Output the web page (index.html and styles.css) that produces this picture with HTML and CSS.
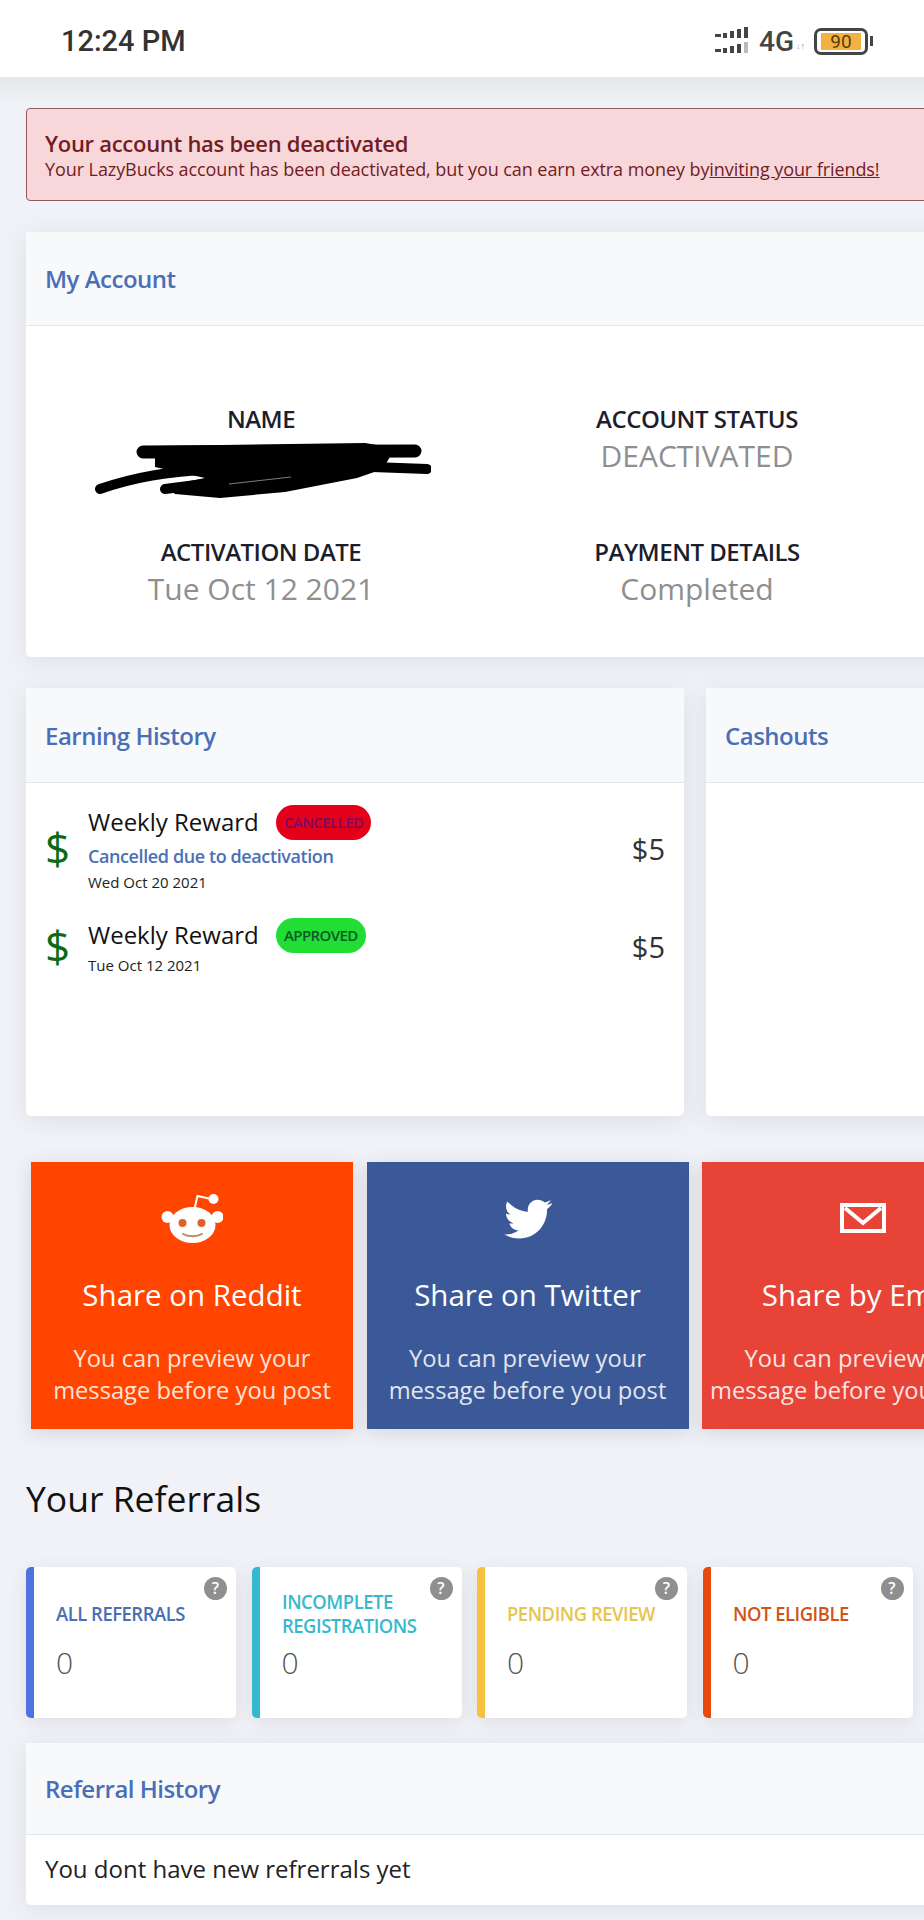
FILE: index.html
```html
<!DOCTYPE html>
<html>
<head>
<title>LazyBucks</title>
<link rel="stylesheet" href="styles.css">
</head>
<body>

<div class="status">
	<span class="time">12:24 PM</span>
	<div class="status-right">
		<svg class="signal" width="36" height="28" viewBox="0 0 36 28">
			<g fill="#444">
				<rect x="0" y="7" width="6" height="3"/><rect x="8" y="6" width="4" height="5"/><rect x="15" y="4" width="4" height="7"/><rect x="22" y="2" width="4" height="9"/><rect x="29" y="0" width="4" height="11"/>
				<rect x="0" y="22" width="6" height="3"/><rect x="8" y="21" width="4" height="5"/><rect x="15" y="19" width="4" height="7"/><rect x="22" y="17" width="4" height="9"/>
			</g>
			<rect x="29" y="15" width="4" height="11" fill="#bbb"/>
		</svg>
		<span class="net">4G</span>
		<span class="arrows">↓↑</span>
		<div class="battery"><span class="level">90</span></div>
		<div class="battery-tip"></div>
	</div>
</div>
<div class="peek">
	<i class="blue"></i><i class="teal"></i><i class="teal"></i>
</div>

<div class="page">

	<div class="alert">
		<h4>Your account has been deactivated</h4>
		<p>Your LazyBucks account has been deactivated, but you can earn extra money by<a href="#">inviting your friends!</a></p>
	</div>

	<div class="card account">
		<div class="card-head">My Account</div>
		<div class="account-body">
			<div class="info">
				<h5>NAME</h5>
				<svg class="scribble" width="336" height="58" viewBox="0 0 336 58">
					<path d="M60 4 L270 1 L300 6 L288 27 L262 36 L190 50 L125 56 L80 52 L70 44 L110 36 L60 25 Z" fill="#000"/>
					<path d="M48 10 L320 9" stroke="#000" stroke-width="13" fill="none" stroke-linecap="round"/>
					<path d="M332 27 L250 24" stroke="#000" stroke-width="10" fill="none" stroke-linecap="round"/>
					<path d="M5 47 C40 35 70 30 120 27" stroke="#000" stroke-width="10" fill="none" stroke-linecap="round"/>
					<path d="M70 47 L140 38" stroke="#000" stroke-width="10" fill="none" stroke-linecap="round"/>
					<path d="M134 42 L196 35" stroke="#fff" stroke-width="0.7" fill="none" opacity="0.7"/>
				</svg>
			</div>
			<div class="info">
				<h5>ACCOUNT STATUS</h5>
				<span>DEACTIVATED</span>
			</div>
			<div class="info">
				<h5>ACTIVATION DATE</h5>
				<span>Tue Oct 12 2021</span>
			</div>
			<div class="info">
				<h5>PAYMENT DETAILS</h5>
				<span>Completed</span>
			</div>
		</div>
	</div>

	<div class="two-col">
		<div class="card history">
			<div class="card-head">Earning History</div>
			<div class="history-body">
				<div class="row first">
					<span class="dollar">$</span>
					<div class="row-text">
						<div class="row-title">Weekly Reward <span class="pill red">CANCELLED</span></div>
						<div class="reason">Cancelled due to deactivation</div>
						<div class="date">Wed Oct 20 2021</div>
					</div>
					<span class="amount">$5</span>
				</div>
				<div class="row">
					<span class="dollar">$</span>
					<div class="row-text">
						<div class="row-title">Weekly Reward <span class="pill green">APPROVED</span></div>
						<div class="date">Tue Oct 12 2021</div>
					</div>
					<span class="amount">$5</span>
				</div>
			</div>
		</div>
		<div class="card history">
			<div class="card-head">Cashouts</div>
		</div>
	</div>

	<div class="shares">
		<div class="share reddit">
			<svg class="share-icon" width="62" height="54" viewBox="0 0 62 54">
				<path d="M33.500 15 L36.500 2 L48 4.500" stroke="#fff" stroke-width="2" fill="none"/>
				<circle cx="52.500" cy="5" r="5" fill="#fff"/>
				<circle cx="6.500" cy="23" r="6" fill="#fff"/>
				<circle cx="56.500" cy="23" r="6" fill="#fff"/>
				<ellipse cx="31.500" cy="31" rx="23" ry="18" fill="#fff"/>
				<circle cx="21.500" cy="29" r="4" fill="#e0602a"/>
				<circle cx="40.500" cy="29" r="4" fill="#e0602a"/>
				<path d="M22 40 C27 43 36 43 41 40" stroke="#b98a60" stroke-width="2" fill="none" stroke-linecap="round"/>
			</svg>
			<h3>Share on Reddit</h3>
			<p>You can preview your message before you post</p>
		</div>
		<div class="share twitter">
			<svg class="share-icon" width="48" height="42" viewBox="0 0 24 21">
				<path fill="#fff" d="M24 1.6c-.9.4-1.8.7-2.8.8 1-.6 1.800-1.600 2.200-2.400-.9.6-2 1-3.100 1.200C19.400.3 18.100-.1 16.800-.1c-2.700 0-4.900 2.200-4.900 4.900 0 .4 0 .8.100 1.100C7.900 5.700 4.300 3.700 1.700.7c-.4.700-.7 1.600-.7 2.500 0 1.700.9 3.200 2.200 4.100-.8 0-1.600-.2-2.200-.6v.1c0 2.400 1.700 4.400 3.900 4.800-.4.100-.8.200-1.300.2-.3 0-.6 0-.9-.1.600 2 2.400 3.400 4.600 3.400-1.700 1.300-3.800 2.100-6.100 2.100-.4 0-.8 0-1.200-.1C2.200 18.400 4.800 19.200 7.500 19.200c9.100 0 14-7.500 14-14v-.6c1-.7 1.800-1.600 2.500-2.600z"/>
			</svg>
			<h3>Share on Twitter</h3>
			<p>You can preview your message before you post</p>
		</div>
		<div class="share email">
			<svg class="share-icon" width="46" height="36" viewBox="0 0 46 36">
				<rect x="2" y="2" width="42" height="26" fill="none" stroke="#fff" stroke-width="4"/>
				<path d="M5 5 L23 20 L41 5" fill="none" stroke="#fff" stroke-width="4"/>
			</svg>
			<h3>Share by Email</h3>
			<p>You can preview your message before you submit</p>
		</div>
	</div>

	<h2 class="section-title">Your Referrals</h2>

	<div class="stats">
		<div class="stat s-blue"><span class="help">?</span><div class="stat-label"><span>ALL REFERRALS</span></div><div class="stat-num">0</div></div>
		<div class="stat s-teal"><span class="help">?</span><div class="stat-label"><span>INCOMPLETE REGISTRATIONS</span></div><div class="stat-num">0</div></div>
		<div class="stat s-yellow"><span class="help">?</span><div class="stat-label"><span>PENDING REVIEW</span></div><div class="stat-num">0</div></div>
		<div class="stat s-orange"><span class="help">?</span><div class="stat-label"><span>NOT ELIGIBLE</span></div><div class="stat-num">0</div></div>
	</div>

	<div class="card referral">
		<div class="card-head">Referral History</div>
		<div class="referral-body">You dont have new refrerrals yet</div>
	</div>

</div>
</body>
</html>
```

FILE: styles.css
```css
html, body { margin: 0; padding: 0; }
body { width: 924px; height: 1920px; overflow: hidden; background-color: #f1f2f7; font-family: "Open Sans", sans-serif; color: #111; }

.status { height: 77px; background-color: #fff; display: flex; align-items: center; justify-content: space-between; padding: 5px 0 0 61px; box-sizing: border-box; }
.time { font-family: Roboto, sans-serif; font-weight: 500; font-size: 29px; color: #333; }
.status-right { display: flex; align-items: center; margin-right: 51px; }
.signal { margin-right: 8px; }
.net { font-family: Roboto, sans-serif; font-weight: 500; font-size: 28px; color: #444; }
.arrows { font-size: 9px; color: #999; margin: 8px 9px 0 2px; }
.battery { width: 54px; height: 27px; box-sizing: border-box; border: 3px solid #444; border-radius: 7px; padding: 2px 4px; display: flex; }
.level { flex: 1; background-color: #f2b141; font-family: Roboto, sans-serif; font-size: 19px; line-height: 17px; text-align: center; color: #5a3d0c; }
.battery-tip { width: 3px; height: 10px; margin-left: 2px; background-color: #444; }

.peek { height: 2px; display: flex; margin-top: -2px; padding-left: 26px; }
.peek i { width: 9px; height: 2px; margin-right: 330px; }
.peek i.blue { background-color: #4a5f90; }
.peek i.teal { background-color: #36a9b4; }

.page { padding: 31px 0 0 26px; width: 1340px; box-sizing: border-box; background: linear-gradient(#e6e7ea, #f1f2f7 30px); }

.alert { background-color: #f8d7da; border: 1px solid #8b5b60; border-radius: 4px; height: 93px; box-sizing: border-box; padding: 20px 18px; color: #721c24; margin-bottom: 31px; }
.alert h4 { margin: 0; font-size: 22px; line-height: 28px; font-weight: 600; letter-spacing: -0.28px; }
.alert p { margin: 0; font-size: 18px; line-height: 24px; letter-spacing: -0.08px; }
.alert a { color: #721c24; text-decoration: underline; }

.card { background-color: #fff; border-radius: 5px; box-shadow: 0 4px 24px rgba(58,59,69,.1); }
.card-head { height: 94px; line-height: 94px; padding-left: 19px; background-color: #f8f9fb; border-bottom: 1px solid #e3e6f0; font-size: 24px; font-weight: 600; color: #4a6fb5; box-sizing: border-box; letter-spacing: -0.5px; }

.account { height: 425px; margin-bottom: 31px; }
.account-body { display: grid; grid-template-columns: 436px 436px; grid-auto-rows: 133px; padding: 77px 0 0 17px; text-align: center; }
.info h5 { margin: 0; font-size: 24px; line-height: 32px; font-weight: 600; color: #1c1e2c; letter-spacing: -0.5px; }
.info span { display: block; font-size: 30px; line-height: 42px; color: #8f8f8f; }
.scribble { display: block; margin: 7px 0 0 52px; }

.two-col { display: grid; grid-template-columns: 658px 658px; gap: 22px; margin-bottom: 46px; }
.history { height: 428px; }
.history .card-head { height: 95px; line-height: 95px; }
.history-body { padding: 20px 19px; }
.row { display: flex; align-items: center; margin-bottom: 23px; }
.dollar { width: 43px; font-size: 44px; color: #0a6b12; }
.row-text { flex: 1; }
.row-title { font-size: 24px; line-height: 38px; }
.reason { font-size: 18px; font-weight: 600; color: #4a6fb5; line-height: 30px; letter-spacing: -0.4px; }
.date { font-size: 15px; line-height: 22px; color: #222; }
.amount { font-size: 29px; color: #333; }
.pill { display: inline-block; font-size: 15px; font-weight: 600; line-height: 35px; padding: 0 8px; border-radius: 18px; margin-left: 11px; vertical-align: 3px; letter-spacing: -0.6px; }
.pill.red { background-color: #e5001a; color: #7a0a60; }
.pill.green { background-color: #22dd33; color: #0a5a2a; }

.shares { display: grid; grid-template-columns: 322px 322px 322px; gap: 13.500px; padding-left: 5px; margin-bottom: 44px; }
.share { height: 267px; box-sizing: border-box; padding-top: 32px; text-align: center; color: #fff; box-shadow: 0 4px 18px rgba(58,59,69,.15); }
.share-icon { display: block; margin: 0 auto; height: 54px; }
.share h3 { margin: 28px 0; font-size: 29.500px; line-height: 38px; font-weight: 400; }
.share p { margin: 0 4px; font-size: 23.700px; line-height: 32px; opacity: .85; }
.reddit { background-color: #ff4500; }
.twitter { background-color: #3b5998; }
.email { background-color: #e74337; }

.section-title { margin: 0 0 44px; font-size: 35.500px; line-height: 50px; font-weight: 400; }

.stats { display: grid; grid-template-columns: repeat(4, 210px); gap: 15.500px; margin-bottom: 25px; }
.stat { position: relative; height: 151px; box-sizing: border-box; background-color: #fff; border-left: 8px solid; border-radius: 5px; padding-left: 22px; box-shadow: 0 4px 18px rgba(58,59,69,.1); }
.stat-label { height: 61px; padding-top: 16px; margin-bottom: -1px; display: flex; align-items: center; font-size: 20px; line-height: 24px; font-weight: 600; letter-spacing: -0.5px; }
.stat-label span { display: block; width: 175px; transform: scaleX(.92); transform-origin: left center; }
.stat-num { font-size: 30px; line-height: 40px; font-weight: 300; color: #555; }
.help { position: absolute; top: 10px; right: 9px; width: 23px; height: 23px; border-radius: 50%; background-color: #8f8f8f; color: #fff; font-size: 16px; line-height: 23px; text-align: center; font-weight: 600; }
.s-blue { border-left-color: #4e73df; }
.s-blue .stat-label { color: #4a6fb5; }
.s-teal { border-left-color: #36b9cc; }
.s-teal .stat-label { color: #36b9cc; }
.s-yellow { border-left-color: #f6c23e; }
.s-yellow .stat-label { color: #e8c44e; }
.s-orange { border-left-color: #e8490f; }
.s-orange .stat-label { color: #d4521a; }

.referral { height: 162px; }
.card.referral .card-head { height: 92px; line-height: 92px; }
.referral-body { padding: 17px 19px; font-size: 24px; line-height: 34px; color: #222; }
```
